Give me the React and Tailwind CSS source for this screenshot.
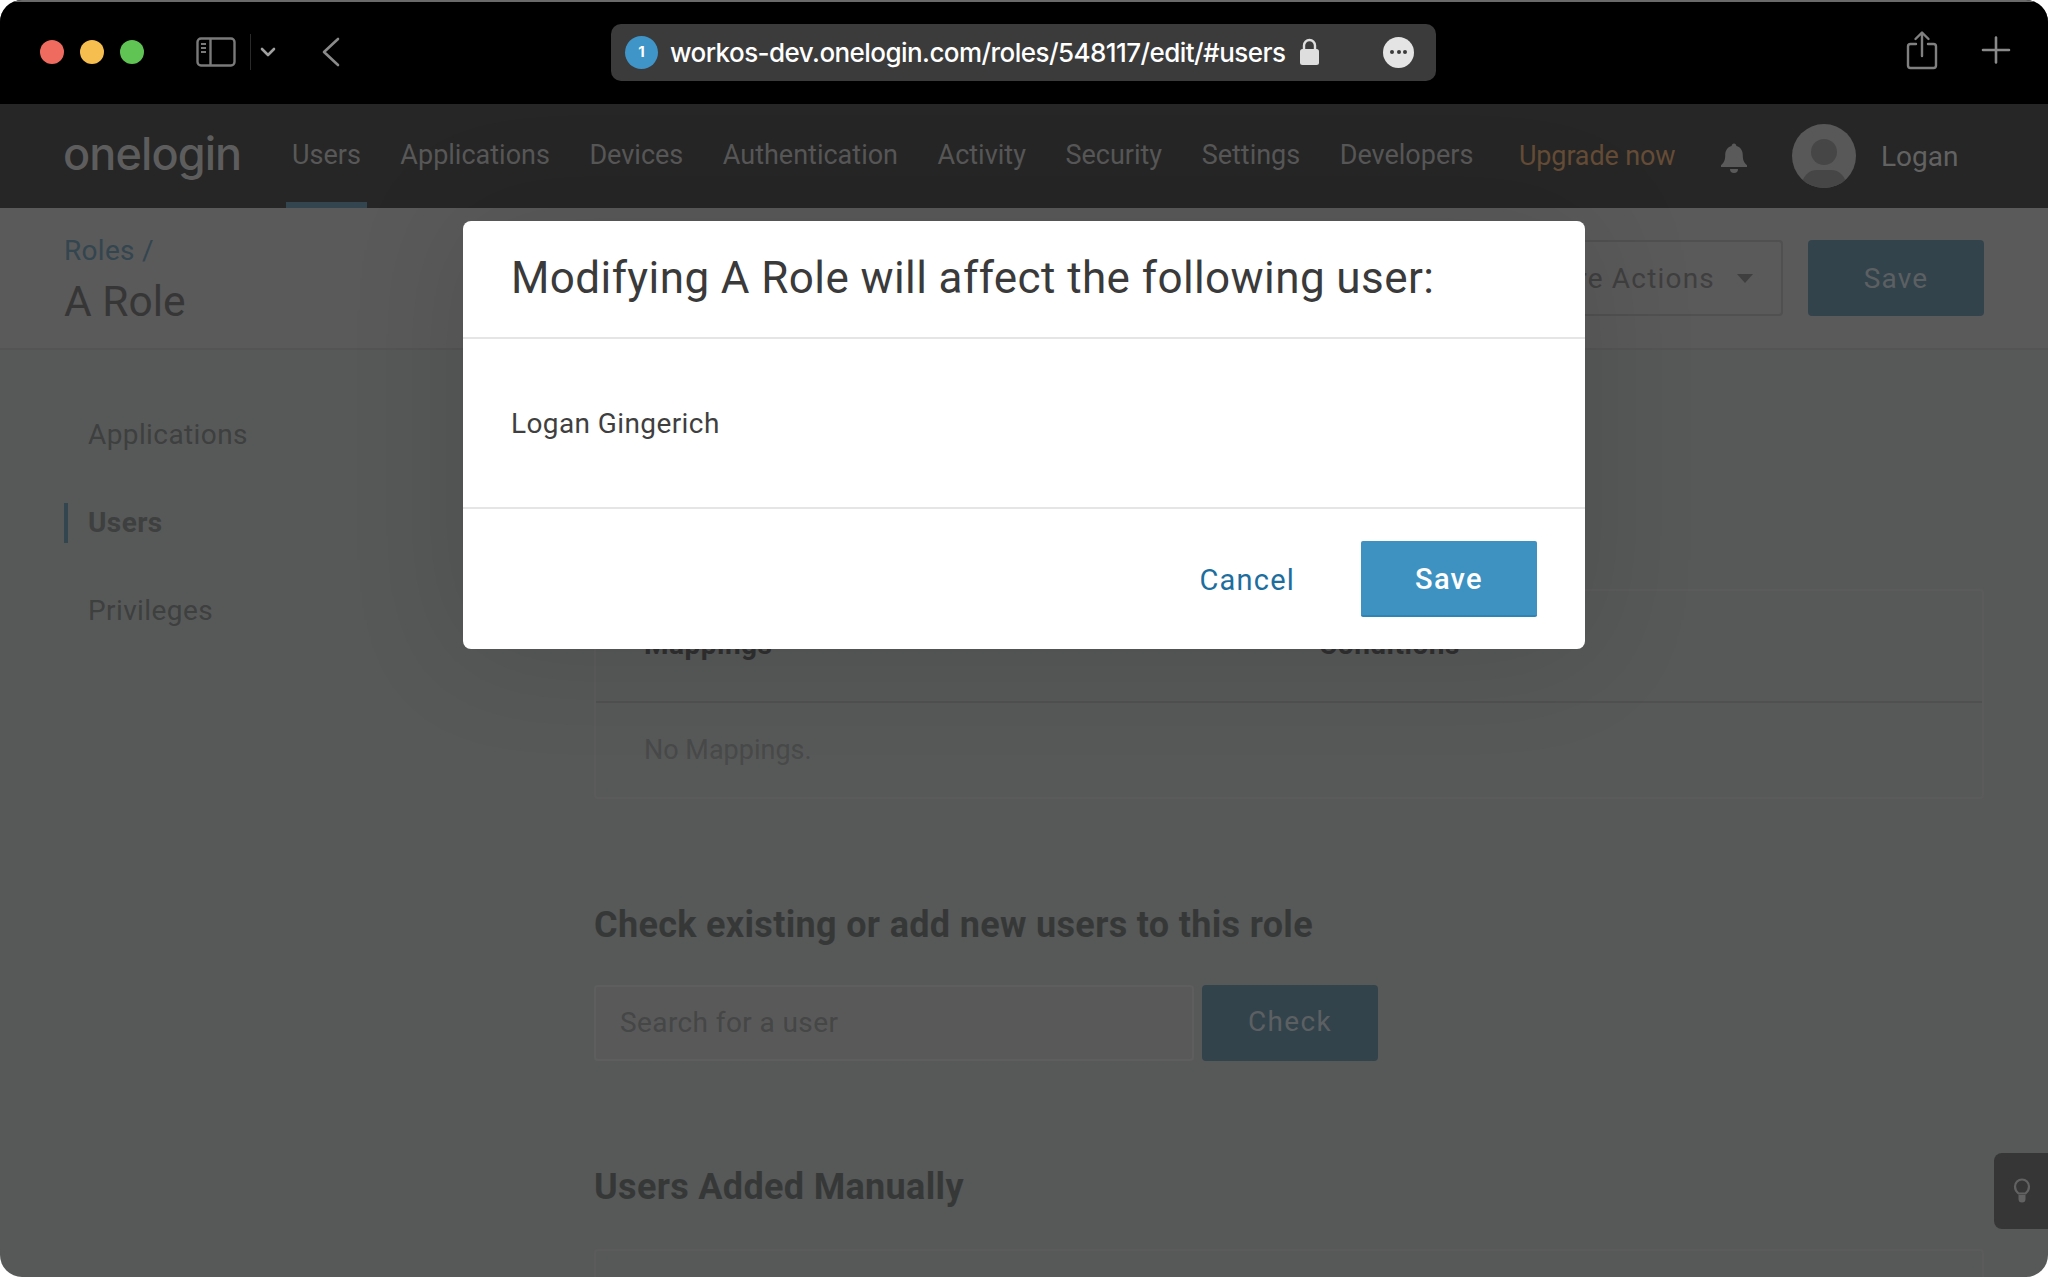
import React from 'react'

// Top nav entries, in order
const NAV_ITEMS = [
  { label: 'Users', active: true },
  { label: 'Applications' },
  { label: 'Devices' },
  { label: 'Authentication' },
  { label: 'Activity' },
  { label: 'Security' },
  { label: 'Settings' },
  { label: 'Developers' },
]

const SIDE_ITEMS = [
  { label: 'Applications' },
  { label: 'Users', active: true },
  { label: 'Privileges' },
]

function SidebarIcon() {
  return (
    <svg width="40" height="30" viewBox="0 0 40 30" fill="none" stroke="#7a7a7a" strokeWidth="2.4">
      <rect x="1.5" y="1.5" width="37" height="27" rx="3.5" />
      <path d="M14.5 1.5v27" />
      <path d="M5 7h5M5 11h5M5 15h5" strokeWidth="1.8" />
    </svg>
  )
}

function BrowserBar() {
  return (
    <div className="h-[104px] bg-black border-t-2 border-[#6a6a6a] flex items-center shrink-0 relative">
      {/* traffic lights */}
      <div className="flex items-center gap-4 ml-10 -mt-[2px]">
        <span className="w-6 h-6 rounded-full bg-[#ef6b5f]" />
        <span className="w-6 h-6 rounded-full bg-[#f6bd4f]" />
        <span className="w-6 h-6 rounded-full bg-[#5fc454]" />
      </div>
      <div className="ml-[52px] -mt-[2px] flex items-center">
        <SidebarIcon />
        <span className="w-px h-9 bg-[#2a2a2a] ml-[14px]" />
        <svg className="ml-[9px]" width="16" height="10" viewBox="0 0 16 10" fill="none" stroke="#a0a0a0" strokeWidth="2.6" strokeLinecap="round" strokeLinejoin="round">
          <path d="M2 2l6 6 6-6" />
        </svg>
        <svg className="ml-[45px]" width="20" height="30" viewBox="0 0 20 30" fill="none" stroke="#8a8a8a" strokeWidth="2.6" strokeLinecap="round" strokeLinejoin="round">
          <path d="M17 2L3 15l14 13" />
        </svg>
      </div>
      {/* address bar */}
      <div className="ml-[270px] -mt-[2px] w-[825px] h-[57px] rounded-[10px] bg-[#3b3b3b] flex items-center pl-[14px] font-['Inter',sans-serif]">
        <span className="w-[33px] h-[33px] rounded-full bg-[#3f95c8] flex items-center justify-center text-white text-[15px] font-bold">1</span>
        <span className="ml-[12px] text-white text-[26px] font-medium tracking-[-0.56px] whitespace-nowrap">workos-dev.onelogin.com/roles/548117/edit/#users</span>
        <svg className="ml-[14px] shrink-0" width="21" height="28" viewBox="0 0 21 28" fill="none">
          <path d="M5 12V7.5a5.5 5.5 0 0 1 11 0V12" stroke="#dedede" strokeWidth="2.4" />
          <rect x="1" y="11" width="19" height="16" rx="2.5" fill="#dedede" />
        </svg>
        <span className="ml-[63px] w-[31px] h-[31px] rounded-full bg-[#e4e4e4] flex items-center justify-center gap-[2.5px] shrink-0">
          <span className="w-[4px] h-[4px] rounded-full bg-[#3b3b3b]" />
          <span className="w-[4px] h-[4px] rounded-full bg-[#3b3b3b]" />
          <span className="w-[4px] h-[4px] rounded-full bg-[#3b3b3b]" />
        </span>
      </div>
      {/* share + new tab */}
      <svg className="absolute left-[1906px] top-[28px]" width="32" height="40" viewBox="0 0 32 40" fill="none" stroke="#808080" strokeWidth="2.4" strokeLinecap="round" strokeLinejoin="round">
        <path d="M10 14H4.500A2.500 2.500 0 0 0 2 16.500V35.500A2.500 2.500 0 0 0 4.500 38h23a2.500 2.500 0 0 0 2.500-2.500V16.500A2.500 2.500 0 0 0 27.500 14H22" />
        <path d="M16 26V3M9.500 9L16 2.500 22.500 9" />
      </svg>
      <svg className="absolute left-[1981px] top-[34px]" width="30" height="28" viewBox="0 0 30 28" fill="none" stroke="#8a8a8a" strokeWidth="2.6" strokeLinecap="round">
        <path d="M15 1.500v25M2 14h26" />
      </svg>
    </div>
  )
}

function TopNav() {
  return (
    <div className="h-[104px] bg-[#262626] flex items-stretch shrink-0 pl-[63px] relative">
      <div className="w-[223px] flex items-center">
        <span className="font-['Inter',sans-serif] font-medium text-[45px] leading-none tracking-[-0.9px] text-[#5d5d5d] -mt-[6px]">onelogin</span>
      </div>
      <div className="flex items-stretch">
        {NAV_ITEMS.map(({ label, active }) => (
          <div
            key={label}
            className={`px-[6px] mr-[27.5px] flex items-center text-[27px] text-[#585858] whitespace-nowrap border-b-[6px] ${active ? 'border-[#33454f]' : 'border-transparent'}`}
          >
            <span className="mt-[4px]">{label}</span>
          </div>
        ))}
      </div>
      <span className="absolute left-[1519px] top-[32px] text-[27px] tracking-[-0.15px] text-[#654c36] whitespace-nowrap">Upgrade now</span>
      <svg className="absolute left-[1720px] top-[38px]" width="28" height="32" viewBox="0 0 28 32" fill="#5a5a5a">
        <path d="M14 1.500c1.400 0 2.300 1 2.400 2.400 4.400 1.100 6.400 4.800 6.400 9.300 0 4.900 1.200 7.400 4.200 10.100v1.700H1v-1.700c3-2.700 4.200-5.200 4.200-10.100 0-4.500 2-8.200 6.400-9.300.1-1.400 1-2.400 2.400-2.400z" />
        <path d="M10 27h8a4 4 0 0 1-8 0z" />
      </svg>
      <div className="absolute left-[1792px] top-[20px] w-16 h-16 rounded-full bg-[#585858] overflow-hidden flex flex-col items-center">
        <span className="w-[26px] h-[26px] rounded-full bg-[#464646] mt-[15px] shrink-0" />
        <span className="w-[44px] h-[30px] rounded-full bg-[#464646] mt-[5px] shrink-0" />
      </div>
      <span className="absolute left-[1881px] top-[32px] text-[28px] text-[#626262]">Logan</span>
    </div>
  )
}

function PageHeader() {
  return (
    <div className="h-[142px] shrink-0 border-b-2 border-[#545454] bg-[#5a5a5a] flex items-start justify-between pl-[64px] pr-[64px]">
      <div>
        <div className="mt-[27px] text-[28px] tracking-[0.3px] leading-[32px] text-[#33454f]">Roles /</div>
        <div className="mt-[10px] text-[42.5px] leading-[50px] text-[#363636]">A Role</div>
      </div>
      <div className="flex items-center gap-[25px] mt-[32px]">
        <div className="w-[320px] h-[76px] rounded-[4px] border-2 border-[#505050] flex items-center justify-end pr-[28px] text-[28px] tracking-[1.2px] text-[#3f3f3f]">
          <span className="mt-[1px]">More Actions</span>
          <span className="ml-[22px] w-0 h-0 border-x-8 border-t-[9px] border-x-transparent border-t-[#3f3f3f]" />
        </div>
        <div className="w-[176px] h-[76px] rounded-[4px] bg-[#33434c] flex items-center justify-center pt-[1px] text-[28px] tracking-[1.2px] text-[#5c6062]">Save</div>
      </div>
    </div>
  )
}

function Sidebar() {
  return (
    <aside className="w-[594px] shrink-0 pl-[64px] pt-[65px] flex flex-col gap-[48px]">
      {SIDE_ITEMS.map(({ label, active }) => (
        <div
          key={label}
          className={`h-10 flex items-center pl-5 text-[28px] tracking-[0.4px] text-[#3e3f3f] border-l-4 ${active ? 'border-[#33454f] font-bold' : 'border-transparent'}`}
        >
          {label}
        </div>
      ))}
    </aside>
  )
}

function MainContent() {
  return (
    <main className="flex-1 pr-[64px] pt-[239px] min-w-0">
      {/* mappings table */}
      <div className="h-[210px] rounded-[4px] border-2 border-[#5b5b5b]">
        <div className="h-[112px] border-b-2 border-[#505050] flex items-center text-[28px] tracking-[0.5px] font-bold text-[#2f2f2f] pl-[48px] pb-[2px]">
          <span className="w-[675px]">Mappings</span>
          <span>Conditions</span>
        </div>
        <div className="h-[94px] flex items-center pl-[48px] text-[27px] text-[#484949]">No Mappings.</div>
      </div>

      <h2 className="mt-[104px] text-[36px] tracking-[0.33px] leading-[44px] font-bold text-[#363838]">Check existing or add new users to this role</h2>
      <div className="mt-[38px] flex gap-2">
        <div className="w-[600px] h-[76px] rounded-[4px] border-2 border-[#5e5e5e] bg-[#595959] flex items-center pl-6 text-[28px] tracking-[0.4px] text-[#454646]">Search for a user</div>
        <div className="w-[176px] h-[76px] rounded-[4px] bg-[#33434c] flex items-center justify-center pb-[2px] text-[28px] tracking-[1.3px] text-[#5c6062]">Check</div>
      </div>

      <h2 className="mt-[104px] text-[36px] tracking-[0.33px] leading-[44px] font-bold text-[#363838]">Users Added Manually</h2>
      <div className="mt-[40px] h-[100px] rounded-[4px] border-2 border-[#5b5b5b]" />
    </main>
  )
}

function ConfirmModal() {
  return (
    <div className="absolute left-[463px] top-[221px] w-[1122px] h-[428px] bg-white rounded-[8px] flex flex-col shadow-[0_0_120px_rgba(0,0,0,0.12)]">
      <div className="h-[118px] shrink-0 border-b-2 border-[#e5e5e5] flex items-center pl-[48px] pb-[2px] text-[44px] text-[#3a3a3a] tracking-[0.41px] whitespace-nowrap">
        Modifying A Role will affect the following user:
      </div>
      <div className="h-[170px] shrink-0 border-b-2 border-[#e5e5e5] flex items-center pl-[48px] pt-[2px] text-[28px] tracking-[0.4px] text-[#3f3f3f]">
        Logan Gingerich
      </div>
      <div className="flex-1 flex items-center justify-end pr-[48px]">
        <span className="text-[29px] tracking-[1.2px] text-[#1d6e9e] mr-[66px] mt-[3px]">Cancel</span>
        <button className="w-[176px] h-[76px] rounded-[2px] bg-[#3d92c2] border-b-2 border-[#2f84b6] pt-[3px] text-white text-[29px] font-medium tracking-[1.3px]">Save</button>
      </div>
    </div>
  )
}

export default function App() {
  return (
    <div className="w-[2048px] h-[1277px] bg-white font-['Roboto',sans-serif]">
      <div className="relative w-full h-full rounded-[22px] overflow-hidden bg-[#575958] flex flex-col">
        <BrowserBar />
        <TopNav />
        <PageHeader />
        <div className="flex flex-1 min-h-0">
          <Sidebar />
          <MainContent />
        </div>
        <ConfirmModal />
        {/* floating hint tab */}
        <div className="absolute left-[1994px] top-[1153px] w-[54px] h-[76px] rounded-l-[8px] bg-[#363636] flex items-center justify-center pl-[2px] pb-[2px]">
          <svg width="18" height="26" viewBox="0 0 18 26" fill="none">
            <path d="M5.500 16.500C3.500 14.800 2 13 2 9.500a7 7 0 0 1 14 0c0 3.500-1.500 5.300-3.500 7z" stroke="#626262" strokeWidth="2.200" />
            <path d="M5.500 18h7v4a3.500 3.500 0 0 1-7 0z" fill="#626262" />
          </svg>
        </div>
      </div>
    </div>
  )
}
